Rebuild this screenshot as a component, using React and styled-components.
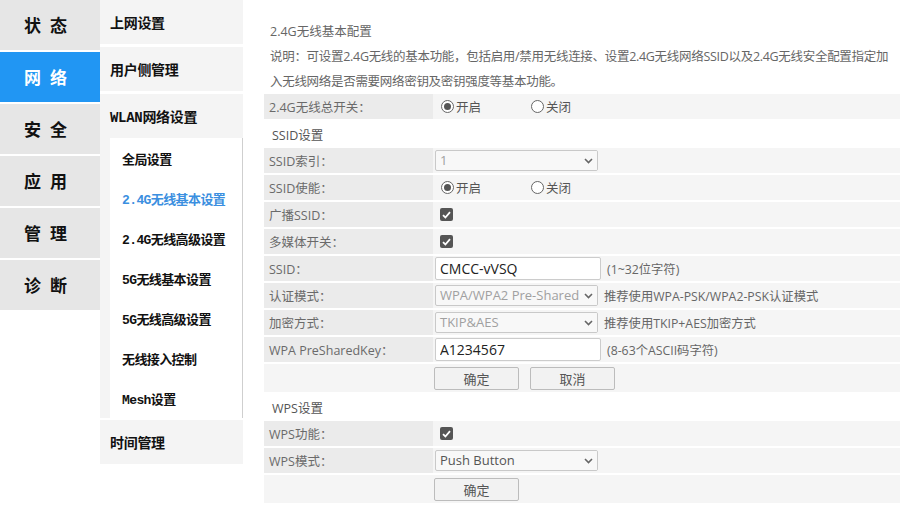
import React from "react";
import styled, { createGlobalStyle } from "styled-components";

const GlobalStyle = createGlobalStyle`
  body {
    margin: 0;
    background: #fff;
    font-family: "Open Sans", "Noto Sans CJK SC", sans-serif;
  }
`;

const Page = styled.div`
  display: flex;
  align-items: flex-start;
  width: 900px;
  height: 520px;
  overflow: hidden;
`;

/* ---------- first level nav ---------- */
const MainNav = styled.div`
  flex: 0 0 100px;
  display: flex;
  flex-direction: column;
  gap: 2px;
`;

const MainNavItem = styled.div`
  height: 50px;
  display: flex;
  align-items: center;
  justify-content: center;
  padding-bottom: 2px;
  box-sizing: border-box;
  background: ${(p) => (p.$active ? "#2196f3" : "#e6e6e6")};
  color: ${(p) => (p.$active ? "#fff" : "#111")};
  font-family: "Noto Sans CJK SC", sans-serif;
  font-weight: 700;
  font-size: 17px;
  letter-spacing: 9px;
`;

/* ---------- second level nav ---------- */
const SubNav = styled.div`
  flex: 0 0 143px;
  display: flex;
  flex-direction: column;
`;

const SubNavItem = styled.div`
  height: 44px;
  margin-bottom: ${(p) => (p.$open ? "0" : "3px")};
  padding-left: 10px;
  display: flex;
  align-items: center;
  background: #f4f4f4;
  color: #111;
  font-family: "Liberation Mono", "Noto Sans CJK SC", monospace;
  font-weight: 700;
  font-size: 14px;
  letter-spacing: -0.3px;
  white-space: nowrap;
`;

const SubMenuWrap = styled.div`
  background: #f4f4f4;
  padding-left: 10px;
  margin-bottom: 2px;
`;

const SubMenu = styled.div`
  background: #fff;
  border-right: 1px solid #cfcfcf;
  display: flex;
  flex-direction: column;
`;

const SubMenuItem = styled.div`
  height: 40px;
  padding-left: 12px;
  display: flex;
  align-items: center;
  color: ${(p) => (p.$active ? "#3b8fe0" : "#111")};
  font-family: "Liberation Mono", "Noto Sans CJK SC", monospace;
  font-weight: 700;
  font-size: 13px;
  letter-spacing: -0.6px;
  white-space: nowrap;
`;

/* ---------- content ---------- */
const Content = styled.div`
  flex: 1;
  min-width: 0;
  margin-left: 21px;
  padding-top: 19px;
  font-size: 12.5px;
  color: #666;
`;

const Title = styled.div`
  line-height: 25px;
  padding-left: 6px;
  color: #666;
`;

const Desc = styled.div`
  line-height: 25px;
  padding-left: 6px;
  color: #666;
  white-space: nowrap;
  letter-spacing: -0.3px;
`;

const Row = styled.div`
  display: grid;
  grid-template-columns: 169px 1fr;
  height: 25px;
  margin-bottom: 2px;
`;

const Label = styled.div`
  background: #ebebeb;
  display: flex;
  align-items: center;
  padding-left: 5px;
  color: #6a6a6a;
  white-space: nowrap;
`;

const Value = styled.div`
  background: #f5f5f5;
  display: flex;
  align-items: center;
  padding-left: 2px;
`;

const ButtonRow = styled.div`
  height: 28px;
  margin-bottom: 2px;
  background: #f5f5f5;
  display: flex;
  align-items: center;
  gap: 11px;
  padding-left: 170px;
`;

const Section = styled.div`
  height: 27px;
  display: flex;
  align-items: center;
  padding-left: 8px;
  color: #555;
`;

const RadioOption = styled.label`
  width: 90px;
  display: flex;
  align-items: center;
  gap: 2px;
  color: #555;
  &:first-child {
    margin-left: 6px;
  }
`;

const RadioDot = styled.span`
  width: 11px;
  height: 11px;
  border: 1px solid #666;
  border-radius: 50%;
  display: flex;
  align-items: center;
  justify-content: center;
  background: #fff;
  &::after {
    content: "";
    width: 7px;
    height: 7px;
    border-radius: 50%;
    background: ${(p) => (p.$checked ? "#555" : "transparent")};
  }
`;

const CheckBox = styled.span`
  width: 13px;
  height: 13px;
  margin-left: 5px;
  border-radius: 2px;
  background: #555;
  display: flex;
  align-items: center;
  justify-content: center;
`;

const SelectBox = styled.div`
  position: relative;
  width: 163px;
  height: 21px;
  box-sizing: border-box;
  border: 1px solid #c9c9c9;
  border-radius: 2px;
  background: #f8f8f8;
  color: ${(p) => (p.$dim ? "#a0a0a0" : "#555")};
  font-size: 13px;
  line-height: 19px;
  padding-left: 4px;
  overflow: hidden;
  white-space: nowrap;
`;

const Chevron = styled.span`
  position: absolute;
  right: 0;
  top: 0;
  bottom: 0;
  width: 18px;
  display: flex;
  align-items: center;
  justify-content: center;
  background: #f8f8f8;
`;

const TextInput = styled.input`
  width: 166px;
  height: 23px;
  box-sizing: border-box;
  border: 1px solid #cccccc;
  border-radius: 2px;
  background: #fff;
  padding: 0 4px;
  font-family: "Open Sans", sans-serif;
  font-size: 14px;
  color: #222;
  outline: none;
`;

const Hint = styled.span`
  margin-left: 6px;
  font-size: 12.3px;
  color: #666;
  white-space: nowrap;
`;

const Button = styled.button`
  width: 85px;
  height: 23px;
  border: 1px solid #bcbcbc;
  border-radius: 2px;
  background: #f2f2f2;
  color: #555;
  font-family: "Noto Sans CJK SC", sans-serif;
  font-size: 13px;
  padding: 0;
`;

const Radios = ({ on }) => (
  <>
    <RadioOption>
      <RadioDot $checked={on} />
      开启
    </RadioOption>
    <RadioOption>
      <RadioDot $checked={!on} />
      关闭
    </RadioOption>
  </>
);

const Checked = () => (
  <CheckBox>
    <svg width="9" height="8" viewBox="0 0 9 8">
      <path d="M1 4.2 L3.4 6.5 L8 1.2" fill="none" stroke="#fff" strokeWidth="1.8" />
    </svg>
  </CheckBox>
);

const Select = ({ children, dim }) => (
  <SelectBox $dim={dim}>
    {children}
    <Chevron>
      <svg width="9" height="6" viewBox="0 0 9 6">
        <path d="M1 1 L4.5 4.5 L8 1" fill="none" stroke="#666" strokeWidth="1.6" />
      </svg>
    </Chevron>
  </SelectBox>
);

const mainNav = ["状态", "网络", "安全", "应用", "管理", "诊断"];
const wlanMenu = [
  "全局设置",
  "2.4G无线基本设置",
  "2.4G无线高级设置",
  "5G无线基本设置",
  "5G无线高级设置",
  "无线接入控制",
  "Mesh设置",
];

export default function App() {
  return (
    <Page>
      <GlobalStyle />
      <MainNav>
        {mainNav.map((n) => (
          <MainNavItem key={n} $active={n === "网络"}>
            {n}
          </MainNavItem>
        ))}
      </MainNav>

      <SubNav>
        <SubNavItem>上网设置</SubNavItem>
        <SubNavItem>用户侧管理</SubNavItem>
        <SubNavItem $open>WLAN网络设置</SubNavItem>
        <SubMenuWrap>
          <SubMenu>
            {wlanMenu.map((m) => (
              <SubMenuItem key={m} $active={m === "2.4G无线基本设置"}>
                {m}
              </SubMenuItem>
            ))}
          </SubMenu>
        </SubMenuWrap>
        <SubNavItem>时间管理</SubNavItem>
      </SubNav>

      <Content>
        <Title>2.4G无线基本配置</Title>
        <Desc>
          说明：可设置2.4G无线的基本功能，包括启用/禁用无线连接、设置2.4G无线网络SSID以及2.4G无线安全配置指定加
          <br />
          入无线网络是否需要网络密钥及密钥强度等基本功能。
        </Desc>

        <Row>
          <Label>2.4G无线总开关：</Label>
          <Value>
            <Radios on />
          </Value>
        </Row>

        <Section>SSID设置</Section>
        <Row>
          <Label>SSID索引：</Label>
          <Value>
            <Select dim>1</Select>
          </Value>
        </Row>
        <Row>
          <Label>SSID使能：</Label>
          <Value>
            <Radios on />
          </Value>
        </Row>
        <Row>
          <Label>广播SSID：</Label>
          <Value>
            <Checked />
          </Value>
        </Row>
        <Row>
          <Label>多媒体开关：</Label>
          <Value>
            <Checked />
          </Value>
        </Row>
        <Row>
          <Label>SSID：</Label>
          <Value>
            <TextInput defaultValue="CMCC-vVSQ" />
            <Hint>(1~32位字符)</Hint>
          </Value>
        </Row>
        <Row>
          <Label>认证模式：</Label>
          <Value>
            <Select dim>WPA/WPA2 Pre-Shared Key</Select>
            <Hint>推荐使用WPA-PSK/WPA2-PSK认证模式</Hint>
          </Value>
        </Row>
        <Row>
          <Label>加密方式：</Label>
          <Value>
            <Select dim>TKIP&amp;AES</Select>
            <Hint>推荐使用TKIP+AES加密方式</Hint>
          </Value>
        </Row>
        <Row>
          <Label>WPA PreSharedKey：</Label>
          <Value>
            <TextInput defaultValue="A1234567" />
            <Hint>(8-63个ASCII码字符)</Hint>
          </Value>
        </Row>
        <ButtonRow>
          <Button>确定</Button>
          <Button>取消</Button>
        </ButtonRow>

        <Section>WPS设置</Section>
        <Row>
          <Label>WPS功能：</Label>
          <Value>
            <Checked />
          </Value>
        </Row>
        <Row>
          <Label>WPS模式：</Label>
          <Value>
            <Select>Push Button</Select>
          </Value>
        </Row>
        <ButtonRow>
          <Button>确定</Button>
        </ButtonRow>
      </Content>
    </Page>
  );
}
